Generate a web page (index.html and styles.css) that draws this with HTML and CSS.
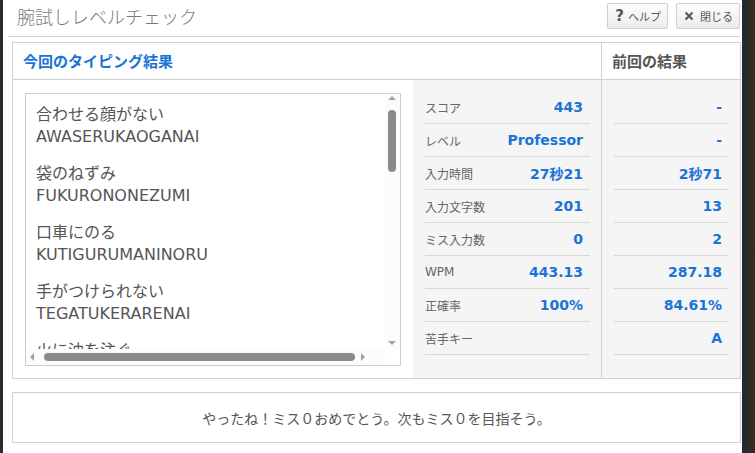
FILE: index.html
```html
<!DOCTYPE html>
<html lang="ja">
<head>
<meta charset="utf-8">
<link rel="stylesheet" href="styles.css">
</head>
<body>
<div class="backdrop">
  <div class="modal">
    <div class="modal-head">
      <h1 class="title">腕試しレベルチェック</h1>
      <div class="actions">
        <button class="btn"><span class="btn-icon">?</span>ヘルプ</button>
        <button class="btn"><svg class="btn-x" width="10" height="10" viewBox="0 0 10 10"><path d="M1.5 1.5 L8.5 8.5 M8.5 1.5 L1.5 8.5" stroke="#555" stroke-width="2" fill="none"/></svg>閉じる</button>
      </div>
    </div>

    <div class="result">
      <div class="col-now">
        <div class="col-head now-head">今回のタイピング結果</div>
        <div class="now-body">
          <div class="listbox">
            <div class="list">
              <div class="item"><div>合わせる顔がない</div><div>AWASERUKAOGANAI</div></div>
              <div class="item"><div>袋のねずみ</div><div>FUKURONONEZUMI</div></div>
              <div class="item"><div>口車にのる</div><div>KUTIGURUMANINORU</div></div>
              <div class="item"><div>手がつけられない</div><div>TEGATUKERARENAI</div></div>
              <div class="item"><div>火に油を注ぐ</div><div>HINIABURAWOSOSOGU</div></div>
            </div>
            <div class="vbar">
              <span class="arrow up"></span>
              <span class="vthumb"></span>
              <span class="arrow down"></span>
            </div>
            <div class="hbar">
              <span class="arrow left"></span>
              <span class="hthumb"></span>
              <span class="arrow right"></span>
            </div>
            <div class="corner"></div>
          </div>
          <div class="stats">
            <div class="row"><span class="label">スコア</span><span class="val">443</span></div>
            <div class="row"><span class="label">レベル</span><span class="val">Professor</span></div>
            <div class="row"><span class="label">入力時間</span><span class="val">27秒21</span></div>
            <div class="row"><span class="label">入力文字数</span><span class="val">201</span></div>
            <div class="row"><span class="label">ミス入力数</span><span class="val">0</span></div>
            <div class="row"><span class="label">WPM</span><span class="val">443.13</span></div>
            <div class="row"><span class="label">正確率</span><span class="val">100%</span></div>
            <div class="row"><span class="label">苦手キー</span><span class="val"></span></div>
          </div>
        </div>
      </div>
      <div class="col-prev">
        <div class="col-head prev-head">前回の結果</div>
        <div class="prev-body">
          <div class="row"><span class="val">-</span></div>
          <div class="row"><span class="val">-</span></div>
          <div class="row"><span class="val">2秒71</span></div>
          <div class="row"><span class="val">13</span></div>
          <div class="row"><span class="val">2</span></div>
          <div class="row"><span class="val">287.18</span></div>
          <div class="row"><span class="val">84.61%</span></div>
          <div class="row"><span class="val">A</span></div>
        </div>
      </div>
    </div>

    <div class="message">やったね！ミス０おめでとう。次もミス０を目指そう。</div>
  </div>
</div>
</body>
</html>
```

FILE: styles.css
```css
* { box-sizing: border-box; }
html, body { margin: 0; padding: 0; }
body {
  width: 755px;
  height: 453px;
  overflow: hidden;
  background: #2a2a2a;
  font-family: "DejaVu Sans", "Noto Sans CJK JP", sans-serif;
  color: #555;
}
.backdrop {
  display: flex;
  height: 453px;
  padding-left: 3px;
  background: linear-gradient(90deg, #2a2a2a 0, #2a2a2a 742px, #1e2a33 742px, #3a2f1c 100%);
}
.modal {
  width: 739px;
  height: 453px;
  background: #fff;
  display: flex;
  flex-direction: column;
}
.modal-head {
  margin: 0 2px 0 5px;
  height: 37px;
  border-bottom: 1px solid #d0d0d0;
  display: flex;
  align-items: flex-start;
  justify-content: space-between;
}
.title {
  margin: 0;
  padding: 4px 0 0 9px;
  font-family: "Noto Sans CJK JP", sans-serif;
  font-weight: 300;
  font-size: 18px;
  line-height: 24px;
  color: #7a7a7a;
}
.actions {
  display: flex;
  gap: 8px;
  padding-top: 3px;
}
.btn {
  height: 26px;
  padding: 0 6px 0 7px;
  border: 1px solid #cfcfcf;
  border-radius: 2px;
  background: linear-gradient(#fdfdfd, #ececec);
  font-family: "Noto Sans CJK JP", sans-serif;
  font-size: 11px;
  color: #555;
  display: flex;
  align-items: center;
  gap: 4px;
}
.btn-icon {
  font-family: "DejaVu Sans", sans-serif;
  font-weight: bold;
  font-size: 15px;
  color: #555;
}
.btn-x { margin-right: 2px; }

.result {
  margin: 5px 1px 0 9px;
  height: 337px;
  border: 1px solid #d0d0d0;
  display: flex;
}
.col-now { width: 588px; display: flex; flex-direction: column; }
.col-prev { flex: 1; display: flex; flex-direction: column; border-left: 1px solid #d0d0d0; background: #f5f5f5; }
.col-head {
  height: 37px;
  border-bottom: 1px solid #d0d0d0;
  font-family: "Noto Sans CJK JP", sans-serif;
  font-weight: bold;
  font-size: 15px;
  line-height: 35px;
  background: #fff;
}
.now-head { color: #1a73d6; padding-left: 10px; }
.prev-head { color: #555; padding-left: 10px; }

.now-body { flex: 1; display: flex; }
.listbox {
  position: relative;
  margin: 13px 12px 0 12px;
  width: 376px;
  height: 273px;
  border: 1px solid #cccccc;
  overflow: hidden;
  background: #fff;
}
.list {
  padding: 8px 0 0 10px;
  font-size: 16px;
  line-height: 23px;
  color: #555;
}
.item { margin-bottom: 13px; white-space: nowrap; }
.item div:first-child { font-family: "Noto Sans CJK JP", sans-serif; }

.vbar {
  position: absolute;
  right: 0; top: 0;
  width: 15px;
  height: 255px;
  background: #fcfcfc;
}
.vthumb {
  position: absolute;
  left: 3px; top: 16px;
  width: 8px; height: 62px;
  border-radius: 4px;
  background: #8a8a8a;
}
.hbar {
  position: absolute;
  left: 0; bottom: 0;
  width: 359px;
  height: 16px;
  background: #fcfcfc;
}
.hthumb {
  position: absolute;
  left: 18px; top: 4px;
  width: 311px; height: 8px;
  border-radius: 4px;
  background: #8a8a8a;
}
.corner {
  position: absolute;
  right: 0; bottom: 0;
  width: 15px; height: 16px;
  background: #fff;
}
.arrow { position: absolute; width: 0; height: 0; border: 4px solid transparent; }
.arrow.up { left: 3px; top: 2px; border-bottom-color: #a0a0a0; border-top-width: 0; }
.arrow.down { left: 3px; bottom: 4px; border-top-color: #a0a0a0; border-bottom-width: 0; }
.arrow.left { left: 4px; top: 4px; border-right-color: #a0a0a0; border-left-width: 0; }
.arrow.right { right: 20px; top: 4px; border-left-color: #a0a0a0; border-right-width: 0; }

.stats {
  flex: 1;
  background: #f5f5f5;
  padding: 11px 11px 0 12px;
}
.prev-body { padding: 11px 12px 0 12px; }
.row {
  height: 33px;
  border-bottom: 1px solid #d8d8d8;
  display: flex;
  align-items: center;
  justify-content: space-between;
  padding-right: 7px;
}
.prev-body .row { justify-content: flex-end; padding-right: 6px; }
.label {
  font-family: "Noto Sans CJK JP", sans-serif;
  font-size: 12px;
  color: #666;
}
.row .label:first-child { font-family: "DejaVu Sans", "Noto Sans CJK JP", sans-serif; }
.val {
  font-weight: bold;
  font-size: 14px;
  color: #1a73d6;
}

.message {
  margin: 13px 1px 0 9px;
  height: 51px;
  border: 1px solid #d0d0d0;
  display: flex;
  align-items: center;
  justify-content: center;
  font-family: "Noto Sans CJK JP", sans-serif;
  font-size: 14px;
  color: #555;
}
```
